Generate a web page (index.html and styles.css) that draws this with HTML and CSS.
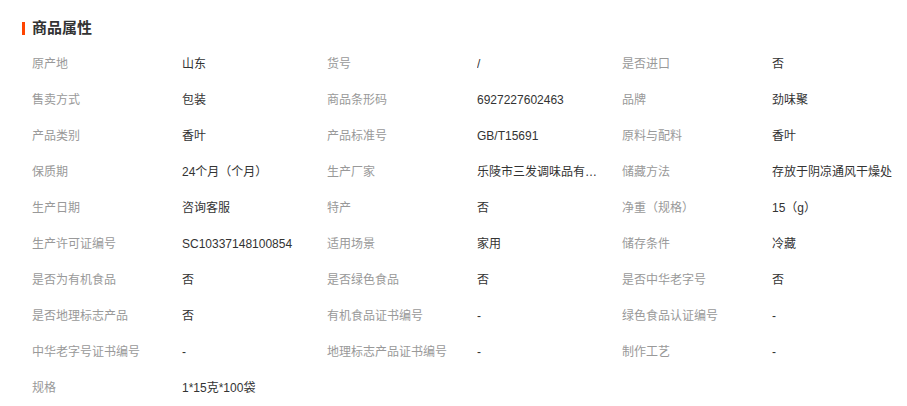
FILE: index.html
```html
<!DOCTYPE html>
<html lang="zh-CN">
<head>
    <meta charset="UTF-8">
    <title>商品属性</title>
    <link rel="stylesheet" href="styles.css">
</head>
<body>
<div class="attr-box">
    <h3 class="attr-title">商品属性</h3>
    <ul class="attr-list">
        <li><span class="label">原产地</span><span class="value">山东</span></li>
        <li><span class="label">货号</span><span class="value">/</span></li>
        <li><span class="label">是否进口</span><span class="value">否</span></li>

        <li><span class="label">售卖方式</span><span class="value">包装</span></li>
        <li><span class="label">商品条形码</span><span class="value">6927227602463</span></li>
        <li><span class="label">品牌</span><span class="value">劲味聚</span></li>

        <li><span class="label">产品类别</span><span class="value">香叶</span></li>
        <li><span class="label">产品标准号</span><span class="value">GB/T15691</span></li>
        <li><span class="label">原料与配料</span><span class="value">香叶</span></li>

        <li><span class="label">保质期</span><span class="value">24个月（个月）</span></li>
        <li><span class="label">生产厂家</span><span class="value">乐陵市三发调味品有限公司</span></li>
        <li><span class="label">储藏方法</span><span class="value">存放于阴凉通风干燥处</span></li>

        <li><span class="label">生产日期</span><span class="value">咨询客服</span></li>
        <li><span class="label">特产</span><span class="value">否</span></li>
        <li><span class="label">净重（规格）</span><span class="value">15（g）</span></li>

        <li><span class="label">生产许可证编号</span><span class="value">SC10337148100854</span></li>
        <li><span class="label">适用场景</span><span class="value">家用</span></li>
        <li><span class="label">储存条件</span><span class="value">冷藏</span></li>

        <li><span class="label">是否为有机食品</span><span class="value">否</span></li>
        <li><span class="label">是否绿色食品</span><span class="value">否</span></li>
        <li><span class="label">是否中华老字号</span><span class="value">否</span></li>

        <li><span class="label">是否地理标志产品</span><span class="value">否</span></li>
        <li><span class="label">有机食品证书编号</span><span class="value">-</span></li>
        <li><span class="label">绿色食品认证编号</span><span class="value">-</span></li>

        <li><span class="label">中华老字号证书编号</span><span class="value">-</span></li>
        <li><span class="label">地理标志产品证书编号</span><span class="value">-</span></li>
        <li><span class="label">制作工艺</span><span class="value">-</span></li>

        <li><span class="label">规格</span><span class="value">1*15克*100袋</span></li>
    </ul>
</div>
</body>
</html>
```

FILE: styles.css
```css
* {
    margin: 0;
    padding: 0;
}
body {
    font-family: "Liberation Sans", "Noto Sans CJK SC", sans-serif;
    font-size: 12px;
    color: #333;
    background-color: #fff;
}
.attr-box {
    padding-top: 20px;
}
.attr-title {
    display: flex;
    align-items: center;
    margin-left: 22px;
    font-size: 15px;
    line-height: 16px;
    font-weight: bold;
    color: #333;
}
.attr-title::before {
    content: "";
    width: 3px;
    height: 13px;
    margin-right: 7px;
    background-color: #ff4400;
}
.attr-list {
    list-style: none;
    display: grid;
    grid-template-columns: repeat(3, 295px);
    margin-top: 10px;
    padding-left: 32px;
}
.attr-list li {
    display: flex;
    height: 36px;
    line-height: 36px;
}
.label {
    width: 150px;
    color: #999;
    white-space: nowrap;
}
.value {
    width: 126px;
    color: #333;
    white-space: nowrap;
    overflow: hidden;
    text-overflow: ellipsis;
}
```
